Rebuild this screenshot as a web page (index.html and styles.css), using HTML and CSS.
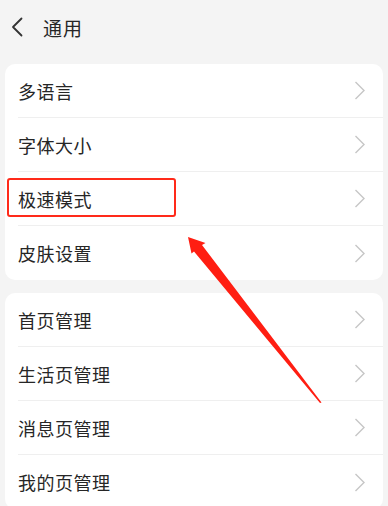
FILE: index.html
```html
<!DOCTYPE html>
<html lang="zh">
<head>
<meta charset="utf-8">
<link rel="stylesheet" href="styles.css">
</head>
<body>
<div class="page">
  <header class="header">
    <svg class="back" width="14" height="20" viewBox="0 0 14 20"><path d="M11.5 1.5 L3 10 L11.5 18.5" fill="none" stroke="#333" stroke-width="1.8" stroke-linecap="round" stroke-linejoin="round"/></svg>
    <span class="title">通用</span>
  </header>
  <section class="card">
    <div class="row"><div class="inner"><span>多语言</span><svg class="chev" width="12" height="19" viewBox="0 0 12 19"><path d="M1.5 1 L10 9.5 L1.5 18" fill="none" stroke="#c6c6c6" stroke-width="1.4"/></svg></div></div>
    <div class="row"><div class="inner"><span>字体大小</span><svg class="chev" width="12" height="19" viewBox="0 0 12 19"><path d="M1.5 1 L10 9.5 L1.5 18" fill="none" stroke="#c6c6c6" stroke-width="1.4"/></svg></div></div>
    <div class="row"><div class="inner"><span>极速模式</span><svg class="chev" width="12" height="19" viewBox="0 0 12 19"><path d="M1.5 1 L10 9.5 L1.5 18" fill="none" stroke="#c6c6c6" stroke-width="1.4"/></svg></div></div>
    <div class="row"><div class="inner"><span>皮肤设置</span><svg class="chev" width="12" height="19" viewBox="0 0 12 19"><path d="M1.5 1 L10 9.5 L1.5 18" fill="none" stroke="#c6c6c6" stroke-width="1.4"/></svg></div></div>
  </section>
  <section class="card card2">
    <div class="row"><div class="inner"><span>首页管理</span><svg class="chev" width="12" height="19" viewBox="0 0 12 19"><path d="M1.5 1 L10 9.5 L1.5 18" fill="none" stroke="#c6c6c6" stroke-width="1.4"/></svg></div></div>
    <div class="row"><div class="inner"><span>生活页管理</span><svg class="chev" width="12" height="19" viewBox="0 0 12 19"><path d="M1.5 1 L10 9.5 L1.5 18" fill="none" stroke="#c6c6c6" stroke-width="1.4"/></svg></div></div>
    <div class="row"><div class="inner"><span>消息页管理</span><svg class="chev" width="12" height="19" viewBox="0 0 12 19"><path d="M1.5 1 L10 9.5 L1.5 18" fill="none" stroke="#c6c6c6" stroke-width="1.4"/></svg></div></div>
    <div class="row"><div class="inner"><span>我的页管理</span><svg class="chev" width="12" height="19" viewBox="0 0 12 19"><path d="M1.5 1 L10 9.5 L1.5 18" fill="none" stroke="#c6c6c6" stroke-width="1.4"/></svg></div></div>
  </section>
  <div class="highlight"></div>
  <svg class="arrow" width="388" height="506" viewBox="0 0 388 506"><polygon points="188,237 205.5,243 202,245 321.5,402.5 320,403 194,251.5 191.5,253.5" fill="#ff1e12"/></svg>
</div>
</body>
</html>
```

FILE: styles.css
```css
* { box-sizing: border-box; }
html, body { margin: 0; padding: 0; }
body {
  background: #f4f4f4;
  font-family: "Noto Sans CJK SC", "Noto Sans", sans-serif;
  color: #262626;
  width: 388px;
  height: 506px;
  overflow: hidden;
}
.page { position: relative; width: 388px; height: 506px; }
.header {
  height: 54px;
  display: flex;
  align-items: center;
  padding-left: 10px;
}
.back { display: block; margin-top: -1px; }
.title {
  font-size: 19px;
  margin-left: 19px;
  letter-spacing: 1px;
  color: #262626;
}
.card {
  margin: 10px 5px 0;
  background: #fff;
  border-radius: 10px;
}
.card2 { margin-top: 13px; }
.row {
  padding-left: 13px;
  height: 54px;
}
.inner {
  height: 54px;
  display: flex;
  align-items: center;
  justify-content: space-between;
  padding-right: 17px;
  border-bottom: 1px solid #efefef;
  font-size: 18px;
  letter-spacing: 0.5px;
}
.row:last-child .inner { border-bottom: none; }
.chev { display: block; }
.highlight {
  position: absolute;
  left: 7px;
  top: 178px;
  width: 169px;
  height: 39px;
  border: 2.5px solid #ff2a1a;
  border-radius: 3px;
}
.arrow { position: absolute; left: 0; top: 0; pointer-events: none; }
```
